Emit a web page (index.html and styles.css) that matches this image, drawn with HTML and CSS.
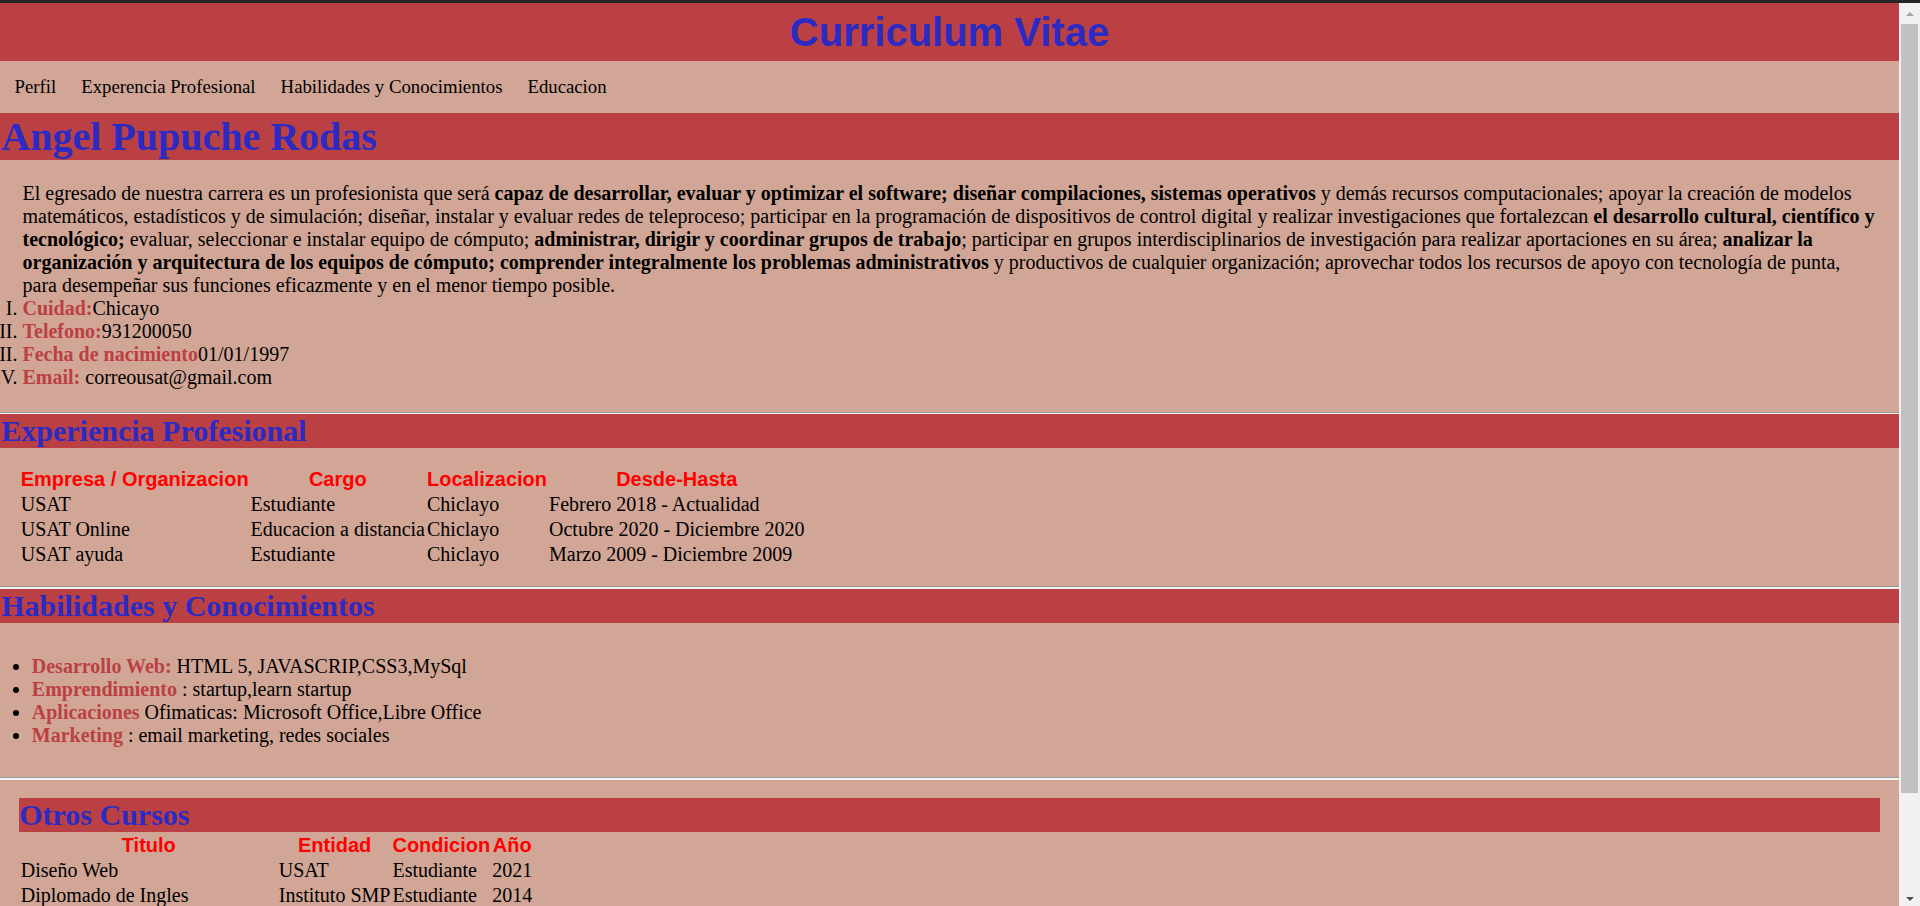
FILE: index.html
```html
<!DOCTYPE html>
<html lang="es">
<head>
<meta charset="utf-8">
<title>Curriculum Vitae</title>
<link rel="stylesheet" href="styles.css">
</head>
<body>
<div class="topbar"></div>
<div class="window">
  <div class="viewport">
    <header class="site-header">
      <h1 class="title">Curriculum Vitae</h1>
    </header>
    <nav class="nav">
      <a href="#perfil">Perfil</a>
      <a href="#experiencia">Experencia Profesional</a>
      <a href="#habilidades">Habilidades y Conocimientos</a>
      <a href="#educacion">Educacion</a>
    </nav>

    <section class="perfil" id="perfil">
      <h2 class="band band-name">Angel Pupuche Rodas</h2>
      <div class="perfil-body">
        <p>El egresado de nuestra carrera es un profesionista que será <b>capaz de desarrollar, evaluar y optimizar el software; diseñar compilaciones, sistemas operativos</b> y demás recursos computacionales; apoyar la creación de modelos matemáticos, estadísticos y de simulación; diseñar, instalar y evaluar redes de teleproceso; participar en la programación de dispositivos de control digital y realizar investigaciones que fortalezcan <b>el desarrollo cultural, científico y tecnológico;</b> evaluar, seleccionar e instalar equipo de cómputo; <b>administrar, dirigir y coordinar grupos de trabajo</b>; participar en grupos interdisciplinarios de investigación para realizar aportaciones en su área; <b>analizar la organización y arquitectura de los equipos de cómputo; comprender integralmente los problemas administrativos</b> y productivos de cualquier organización; aprovechar todos los recursos de apoyo con tecnología de punta, para desempeñar sus funciones eficazmente y en el menor tiempo posible.</p>
        <ol class="datos">
          <li><span class="label">Cuidad:</span>Chicayo</li>
          <li><span class="label">Telefono:</span>931200050</li>
          <li><span class="label">Fecha de nacimiento</span>01/01/1997</li>
          <li><span class="label">Email:</span> correousat@gmail.com</li>
        </ol>
      </div>
    </section>
    <hr class="sep sep-thin">

    <section class="experiencia" id="experiencia">
      <h2 class="band">Experiencia Profesional</h2>
      <table class="tabla tabla-exp">
        <thead>
          <tr><th>Empresa / Organizacion</th><th>Cargo</th><th>Localizacion</th><th>Desde-Hasta</th></tr>
        </thead>
        <tbody>
          <tr><td>USAT</td><td>Estudiante</td><td>Chiclayo</td><td>Febrero 2018 - Actualidad</td></tr>
          <tr><td>USAT Online</td><td>Educacion a distancia</td><td>Chiclayo</td><td>Octubre 2020 - Diciembre 2020</td></tr>
          <tr><td>USAT ayuda</td><td>Estudiante</td><td>Chiclayo</td><td>Marzo 2009 - Diciembre 2009</td></tr>
        </tbody>
      </table>
    </section>
    <hr class="sep">

    <section class="habilidades" id="habilidades">
      <h2 class="band">Habilidades y Conocimientos</h2>
      <ul class="skills">
        <li><span class="label">Desarrollo Web:</span> HTML 5, JAVASCRIP,CSS3,MySql</li>
        <li><span class="label">Emprendimiento</span> : startup,learn startup</li>
        <li><span class="label">Aplicaciones</span> Ofimaticas: Microsoft Office,Libre Office</li>
        <li><span class="label">Marketing</span> : email marketing, redes sociales</li>
      </ul>
    </section>
    <hr class="sep">

    <section class="cursos" id="educacion">
      <h2 class="band band-inset">Otros Cursos</h2>
      <table class="tabla tabla-cursos">
        <thead>
          <tr><th class="col-titulo">Titulo</th><th>Entidad</th><th>Condicion</th><th>Año</th></tr>
        </thead>
        <tbody>
          <tr><td>Diseño Web</td><td>USAT</td><td>Estudiante</td><td>2021</td></tr>
          <tr><td>Diplomado de Ingles</td><td>Instituto SMP</td><td>Estudiante</td><td>2014</td></tr>
        </tbody>
      </table>
    </section>
  </div>

  <div class="scrollbar" aria-hidden="true">
    <div class="sb-btn sb-up"><span class="arrow-up"></span></div>
    <div class="sb-track"><div class="sb-thumb"></div></div>
    <div class="sb-btn sb-down"><span class="arrow-down"></span></div>
  </div>
</div>
</body>
</html>
```

FILE: styles.css
```css
* {
  box-sizing: border-box;
}

html,
body {
  margin: 0;
  padding: 0;
  height: 906px;
  overflow: hidden;
}

body {
  background: #262626;
  font-family: "Liberation Serif", "Times New Roman", serif;
  font-size: 20px;
  color: #000;
}

.topbar {
  height: 3px;
  background: #262626;
}

.window {
  display: flex;
  height: 903px;
}

.viewport {
  flex: 1;
  min-width: 0;
  overflow: hidden;
  background: #d1a696;
}

/* header */
.site-header {
  background: #bb4044;
  padding: 6px 0;
}

.title {
  margin: 0;
  font-family: "Liberation Sans", Arial, sans-serif;
  font-weight: bold;
  font-size: 40px;
  line-height: 46px;
  color: #2b2bc3;
  text-align: center;
}

/* nav */
.nav {
  height: 52px;
  display: flex;
  align-items: center;
  padding-left: 2px;
}

.nav a {
  padding: 0 12.5px;
  font-size: 18.75px;
  color: #000;
  text-decoration: none;
}

/* section bands */
.band {
  margin: 0;
  background: #bb4044;
  color: #2b2bc3;
  font-weight: bold;
  font-size: 30px;
  line-height: 34px;
  padding-left: 1.25px;
}

.band-name {
  font-size: 40px;
  line-height: 47px;
}

.band-inset {
  padding-left: 0.5px;
}

.label {
  color: #bb4044;
  font-weight: bold;
}

/* perfil */
.perfil-body {
  padding: 22px 22.5px 0;
}

.perfil-body p {
  margin: 0;
  line-height: 23px;
}

.datos {
  margin: 0 0 23px;
  padding: 0;
  list-style: upper-roman outside;
  line-height: 23px;
}

/* separators */
.sep {
  margin: 0;
  height: 0;
  border: 0;
  border-top: 1px solid #9b9b9b;
  border-bottom: 2px solid #f4f4f4;
}

.sep-thin {
  border-bottom-width: 1px;
}

/* tables */
.tabla {
  border-collapse: separate;
  border-spacing: 2px;
}

.tabla th {
  padding: 0;
  font-family: "Liberation Sans", Arial, sans-serif;
  font-weight: bold;
  font-size: 20px;
  line-height: 23px;
  color: #ff0000;
  text-align: center;
}

.tabla td {
  padding: 0;
  line-height: 23px;
  text-align: left;
}

.tabla-exp {
  margin: 18px 0 18px 18.75px;
}

.tabla-cursos {
  margin: 0;
}

.col-titulo {
  width: 256px;
}

/* habilidades */
.skills {
  margin: 31.5px 0 30.5px;
  padding-left: 31.8px;
  line-height: 23px;
  list-style: disc outside;
}

/* cursos */
.cursos {
  padding: 18px 18.75px 0;
}

/* fake window scrollbar */
.scrollbar {
  width: 21px;
  flex: none;
  background: #f1f1f1;
  display: flex;
  flex-direction: column;
}

.sb-btn {
  height: 21px;
  flex: none;
  display: flex;
  align-items: center;
  justify-content: center;
}

.sb-down {
  padding-top: 6px;
}

.sb-track {
  flex: 1;
  padding: 0 2px;
}

.sb-thumb {
  height: 769px;
  background: #c1c1c1;
}

.arrow-up {
  width: 0;
  height: 0;
  border-left: 4.5px solid transparent;
  border-right: 4.5px solid transparent;
  border-bottom: 4.5px solid #a3a3a3;
}

.arrow-down {
  width: 0;
  height: 0;
  border-left: 4.5px solid transparent;
  border-right: 4.5px solid transparent;
  border-top: 4.5px solid #505050;
}
```
